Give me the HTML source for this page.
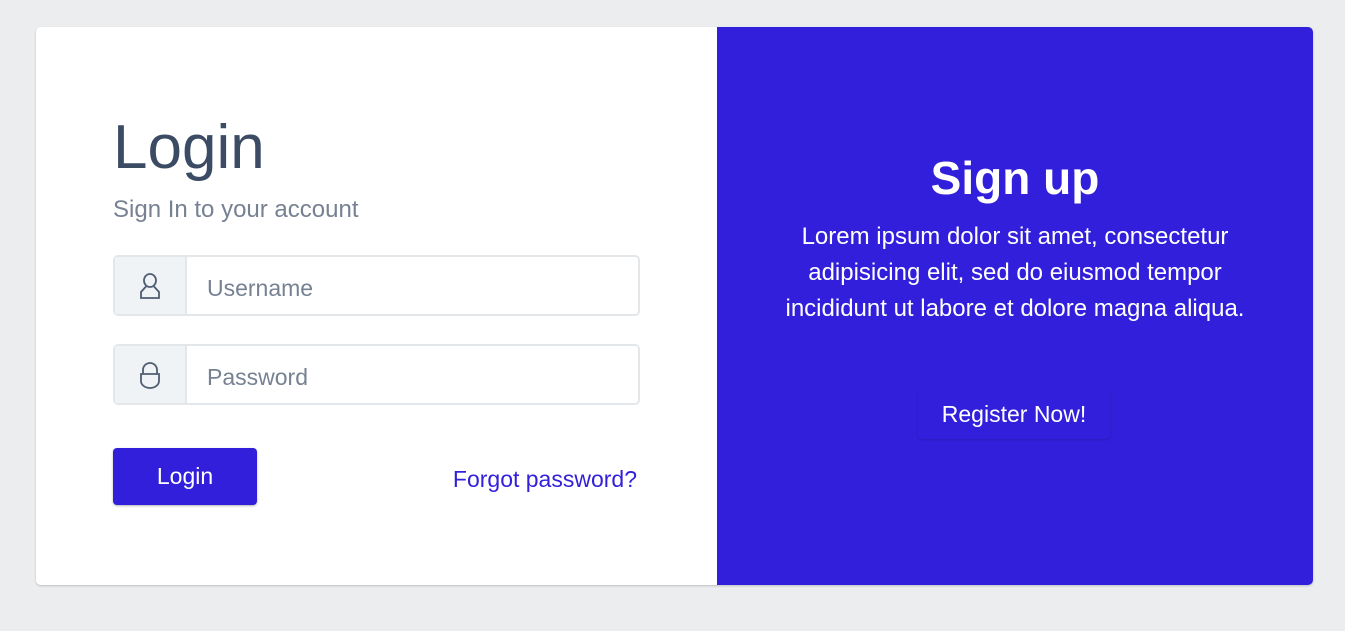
<!DOCTYPE html>
<html><head><meta charset="utf-8"><style>
*{box-sizing:border-box;margin:0;padding:0}
body{width:1345px;height:631px;background:#ebedef;font-family:"Liberation Sans",sans-serif;position:relative;overflow:hidden}
.card{position:absolute;left:36px;top:27px;width:1277px;height:558px;border-radius:5px;overflow:hidden;box-shadow:0 1px 2px rgba(0,0,0,.2);background:#fff}
.left{position:absolute;left:0;top:0;width:681px;height:558px;background:#fff}
.right{position:absolute;left:681px;top:0;width:596px;height:558px;background:#321fdb;color:#fff;text-align:center}
h1{position:absolute;left:77px;top:85px;font-size:62px;font-weight:400;color:#3c4b64}
.sub{position:absolute;left:77px;top:169px;font-size:24px;color:#768192}
.ig{position:absolute;left:77px;width:527px;height:61px;border:2px solid #e4e7ea;border-radius:5px;display:flex}
.ig .ic{width:72px;background:#f0f3f5;border-right:2px solid #e4e7ea;display:flex;align-items:center;justify-content:center}
.ig .tx{padding-left:20px;padding-top:5px;font-size:23px;color:#768192;display:flex;align-items:center}
.btn{position:absolute;left:77px;top:421px;width:144px;height:57px;background:#321fdb;color:#fff;border-radius:4px;font-size:23px;display:flex;align-items:center;justify-content:center;box-shadow:0 1px 2px rgba(0,0,0,.3)}
.fp{position:absolute;right:80px;top:439px;font-size:23px;color:#321fdb}
h2{position:absolute;left:0;right:0;top:124px;font-size:46px;font-weight:700}
.p{position:absolute;left:40px;right:40px;top:192px;font-size:24px;line-height:36px}
.reg{position:absolute;left:201px;top:362px;width:192px;height:50px;border-radius:4px;font-size:23px;display:flex;align-items:center;justify-content:center;box-shadow:0 1px 2px rgba(0,0,0,.15)}
</style></head><body>
<div class="card">
<div class="left">
<h1>Login</h1>
<div class="sub">Sign In to your account</div>
<div class="ig" style="top:228px"><div class="ic"><svg width="24" height="30" viewBox="0 0 24 30" fill="none" stroke="#4f5d73" stroke-width="1.8"><path d="M12 3 a6 6.5 0 0 1 0 13 a6 6.5 0 0 1 0 -13 Z"/><path d="M8 15.5 L3 21 V27 H21 V21 L16 15.5"/></svg></div><div class="tx">Username</div></div>
<div class="ig" style="top:317px"><div class="ic"><svg width="22" height="28" viewBox="0 0 22 28" fill="none" stroke="#4f5d73" stroke-width="1.8"><path d="M4 13 V9 a7 7 0 0 1 14 0 V13"/><path d="M2 13 H20 V20 a9 7 0 0 1 -18 0 Z"/></svg></div><div class="tx">Password</div></div>
<div class="btn">Login</div>
<div class="fp">Forgot password?</div>
</div>
<div class="right">
<h2>Sign up</h2>
<div class="p">Lorem ipsum dolor sit amet, consectetur adipisicing elit, sed do eiusmod tempor incididunt ut labore et dolore magna aliqua.</div>
<div class="reg">Register Now!</div>
</div>
</div>
</body></html>
